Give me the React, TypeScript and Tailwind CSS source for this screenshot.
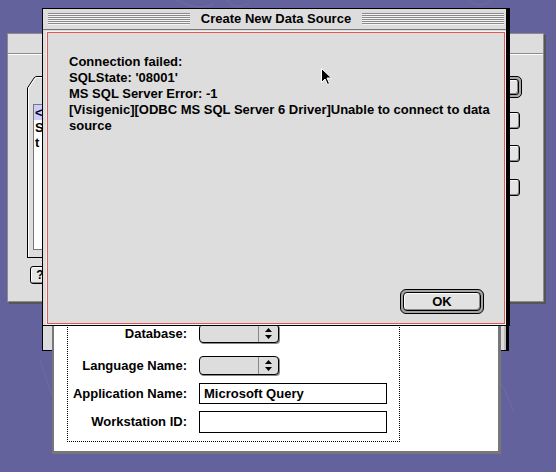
const stripes =
  "h-[12px] flex-1 bg-[repeating-linear-gradient(to_bottom,#8a8a8a_0px,#8a8a8a_1px,#f4f4f4_1px,#f4f4f4_2px)]";

function DesktopPattern() {
  return (
    <svg className="absolute inset-0 h-full w-full" viewBox="0 0 556 472" fill="none">
      <g stroke="#ffffff" strokeOpacity="0.045" strokeWidth="1.5">
        <path d="M176 0 C190 6 200 10 214 4" />
        <path d="M226 0 C232 6 240 10 250 2" />
        <path d="M468 0 C476 6 484 6 492 0" />
        <path d="M40 360 C44 372 48 384 52 396" />
        <path d="M500 382 C506 392 510 402 514 412" />
      </g>
    </svg>
  );
}

function BackWizard() {
  return (
    <div className="absolute left-[7px] top-[33px] flex h-[269px] w-[537px] flex-col border border-[#8c8c8c] bg-[#dddddd] shadow-[2px_2px_0_#555555]">
      <div className="h-[20px] border-b border-[#8c8c8c] shadow-[0_1px_0_#ffffff]" />
      <div className="flex flex-1 justify-between pl-[19px] pr-[21px] pt-[22px]">
        {/* tab panel with list, mostly under the alert */}
        <div className="flex w-[18px] flex-col">
          <svg width="18" height="16" viewBox="0 0 18 16" fill="none" className="block">
            <path d="M0.5 16 V12 L7 2 Q8 0.5 10 0.5 H18" stroke="#000" />
            <path d="M1.5 16 V12.3 L8 2.5 Q8.8 1.5 10 1.5 H18" stroke="#fff" />
          </svg>
          <div className="flex h-[166px] flex-col border-b border-l border-black pb-[7px] pl-[5px] pt-[12px] shadow-[inset_1px_0_0_#ffffff]">
            <div className="flex h-[146px] flex-col overflow-hidden border border-[#777777] bg-white text-[13px] leading-[15px]">
              <div className="bg-[#ccccff] pl-[1px]">&lt;</div>
              <div className="pl-[1px]">S</div>
              <div className="pl-[1px]">t</div>
            </div>
          </div>
          <div className="ml-[3px] mt-[8px] flex h-[18px] w-[20px] items-center justify-center rounded-[3px] border border-black bg-[#e6e6e6] text-[12px] shadow-[inset_-1px_-1px_0_#888888,inset_1px_1px_0_#ffffff]">
            ?
          </div>
        </div>
        {/* right-hand buttons */}
        <div className="flex flex-col items-end">
          <div className="flex h-[22px] w-[80px] rounded-[5px] border border-black bg-[#a8a8a8] p-[2px]">
            <div className="flex-1 rounded-[3px] border border-black bg-[#e4e4e4] shadow-[inset_-1px_-1px_0_#888888,inset_1px_1px_0_#ffffff]" />
          </div>
          <div className="mr-[2px] mt-[14px] h-[17px] w-[76px] rounded-[3px] border border-black bg-[#e4e4e4] shadow-[inset_-1px_-1px_0_#888888,inset_1px_1px_0_#ffffff]" />
          <div className="mr-[2px] mt-[16px] h-[17px] w-[76px] rounded-[3px] border border-black bg-[#e4e4e4] shadow-[inset_-1px_-1px_0_#888888,inset_1px_1px_0_#ffffff]" />
          <div className="mr-[2px] mt-[17px] h-[17px] w-[76px] rounded-[3px] border border-black bg-[#e4e4e4] shadow-[inset_-1px_-1px_0_#888888,inset_1px_1px_0_#ffffff]" />
        </div>
      </div>
    </div>
  );
}

function SetupFrame() {
  return (
    <div className="absolute left-[42px] top-[40px] h-[311px] w-[467px] border border-r-[3px] border-black bg-[#dddddd] shadow-[inset_-2px_0_0_#bbbbbb]" />
  );
}

function UpDown() {
  return (
    <svg width="7" height="11" viewBox="0 0 7 11" className="block">
      <path d="M3.5 0 L7 4 H0 Z" fill="#000" />
      <path d="M0 7 H7 L3.5 11 Z" fill="#000" />
    </svg>
  );
}

function Popup() {
  return (
    <div className="flex h-[19px] w-[80px] rounded-[4px] border border-black bg-[#dddddd] shadow-[1px_1px_0_#888888]">
      <div className="flex-1" />
      <div className="flex w-[20px] items-center justify-center border-l border-[#888888]">
        <UpDown />
      </div>
    </div>
  );
}

function SetupPanel() {
  const rows = [
    { label: "Database:", kind: "popup", mt: "mt-0", h: "h-[19px]" },
    { label: "Language Name:", kind: "popup", mt: "mt-[13px]", h: "h-[19px]" },
    { label: "Application Name:", kind: "field", value: "Microsoft Query", mt: "mt-[8px]", h: "h-[21px]" },
    { label: "Workstation ID:", kind: "field", value: "", mt: "mt-[7px]", h: "h-[22px]" },
  ];
  return (
    <div className="absolute left-[52px] top-[282px] h-[172px] w-[449px] border-b-[3px] border-l-2 border-r-[3px] border-[#777777] bg-white pl-[13px] pt-[8px]">
      <div className="w-[333px] border border-dotted border-black pb-[8px] pt-[33px]">
        {rows.map((r) => (
          <div key={r.label} className={`flex items-center ${r.mt} ${r.h}`}>
            <div className="w-[119px] whitespace-nowrap text-right">{r.label}</div>
            <div className="ml-[12px]">
              {r.kind === "popup" ? (
                <Popup />
              ) : (
                <div className={`flex w-[188px] items-center border border-black bg-white pl-[4px] ${r.h}`}>
                  {r.value}
                </div>
              )}
            </div>
          </div>
        ))}
      </div>
    </div>
  );
}

function AlertWindow() {
  return (
    <div className="absolute left-[42px] top-[8px] flex h-[318px] w-[468px] flex-col border border-r-4 border-black bg-[#dddddd]">
      <div className="flex h-[21px] items-center border-b border-[#777777] pl-[5px] pr-[2px]">
        <div className={stripes} />
        <div className="whitespace-nowrap px-[11px] leading-[16px]">Create New Data Source</div>
        <div className={stripes} />
      </div>
      <div className="mb-[1px] ml-[4px] mr-[1px] mt-[2px] flex flex-1 flex-col border border-[#e35656] pb-[9px] pl-[21px] pr-[20px] pt-[21px] shadow-[0_0_0_1px_#f4f4f4]">
        <div className="whitespace-nowrap leading-[16px]">
          Connection failed:
          <br />
          SQLState: '08001'
          <br />
          MS SQL Server Error: -1
          <br />
          [Visigenic][ODBC MS SQL Server 6 Driver]Unable to connect to data
          <br />
          source
        </div>
        <div className="mt-auto flex h-[25px] w-[84px] self-end rounded-[6px] border border-black bg-[#a4a4a4] p-[2px]">
          <button className="flex flex-1 items-center justify-center rounded-[4px] border border-black bg-[#e2e2e2] text-[13px] font-bold leading-none shadow-[inset_-1px_-1px_0_#8a8a8a,inset_1px_1px_0_#ffffff]">
            OK
          </button>
        </div>
      </div>
    </div>
  );
}

function Cursor() {
  return (
    <svg className="absolute left-[320px] top-[67px]" width="13" height="20" viewBox="0 0 13 20">
      <path
        d="M1.5 1.5 V15.5 L5 12 L7.5 17.5 L9.5 16.5 L7 11 H11.5 Z"
        fill="#000"
        stroke="#fff"
        strokeWidth="1"
        strokeLinejoin="miter"
      />
    </svg>
  );
}

export default function App() {
  return (
    <div className="relative h-[472px] w-[556px] overflow-hidden bg-[#63629c] font-['Liberation_Sans',Arial,sans-serif] text-[13px] font-bold text-black">
      <DesktopPattern />
      <BackWizard />
      <SetupFrame />
      <SetupPanel />
      <AlertWindow />
      <Cursor />
    </div>
  );
}
